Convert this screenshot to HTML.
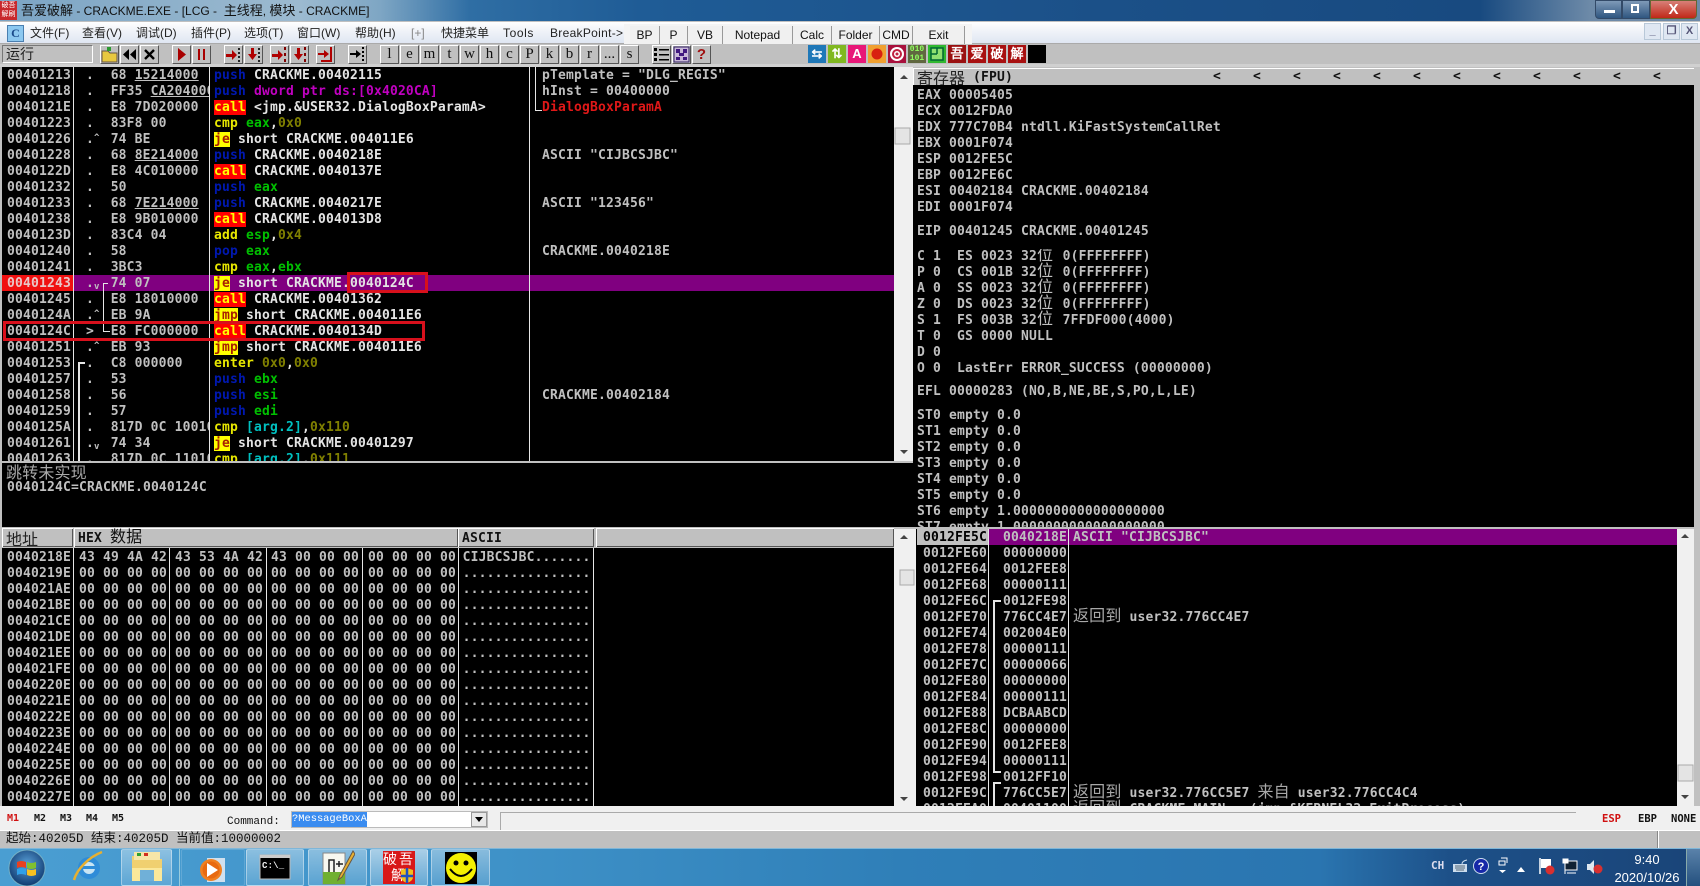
<!DOCTYPE html>
<html><head><meta charset="utf-8"><title>CRACKME</title>
<style>
html,body{margin:0;padding:0;width:1700px;height:886px;overflow:hidden;background:#c0c0c0;font-family:"Liberation Sans","WenQuanYi Zen Hei",sans-serif}
div,pre,svg{position:absolute;margin:0}
pre{font:bold 13px/16px "DejaVu Sans Mono","Liberation Mono",monospace;letter-spacing:.17px;color:#c0c0c0;white-space:pre;overflow:hidden}
.bk{background:#000}
.cj{font:400 16px/16px "WenQuanYi Zen Hei","Noto Sans CJK SC",sans-serif}
.ci{font:400 16px/0 "WenQuanYi Zen Hei","Noto Sans CJK SC",sans-serif;color:#a8a8a8}
.hd{font:bold 13px/21px "DejaVu Sans Mono",monospace;letter-spacing:.17px;color:#111;white-space:pre;background:#c0c0c0;top:528px;height:19px;box-shadow:inset 1px 1px 0 #fff,inset -1px -1px 0 #555}
i{font-style:normal}
.p{color:#0018b0}.y{color:#e8e800}.g{color:#00c000}.o{color:#808000}.m{color:#c000c0}.k{color:#00c0c0}
.w{color:#e4e4e4}
.c{background:#f00;color:#ff0}
.j{background:#ff0;color:#a82000}
u{text-decoration:underline}
.z{font:400 16px/0 "WenQuanYi Zen Hei",sans-serif;margin-right:9.5px;color:#c0c0c0}
.up{font-size:9px;line-height:0;vertical-align:3px}
.dn{font-size:9px;line-height:0;vertical-align:-2px}
.v{background:#e6e6e6;width:1px}
.b{top:45px;width:17px;height:17px;background:#c0c0c0;border:1px solid;border-color:#fff #555 #555 #fff;font:15px/17px "Liberation Serif",serif;text-align:center;color:#111;overflow:hidden}
.s{top:26px;height:19px;background:#f0f0f0;border-right:1px solid #999;border-bottom:1px solid #aaa;font:12px/19px "Liberation Sans",sans-serif;color:#111;text-align:center}
.mn{top:24px;height:18px;font:12px/18px "Liberation Sans","WenQuanYi Zen Hei",sans-serif;color:#222;white-space:pre}
.ic{top:45px;width:18px;height:18px;overflow:hidden;text-align:center;font:bold 13px/18px "WenQuanYi Zen Hei",sans-serif;color:#fff}
.mk{top:812px;font:bold 10px/14px "DejaVu Sans Mono",monospace;color:#111}
.tb{top:849px;height:37px;background:linear-gradient(180deg,rgba(255,255,255,.38),rgba(255,255,255,.12));border:1px solid rgba(255,255,255,.4);box-sizing:border-box;border-radius:2px}
.rb{border:3px solid #d8101c;box-sizing:border-box}
.wc{top:23px;width:17px;height:17px;background:#dfe7f2;border:1px solid #b8c8d8;box-sizing:border-box;font:bold 11px/15px "Liberation Sans";text-align:center;color:#557}
</style></head><body>

<!-- title bar -->
<div style="left:0;top:0;width:1700px;height:21px;background:linear-gradient(90deg,#7ba4c4 0,#9cbad0 300px,#7ea6c4 380px,#2f6ea4 470px,#1f5c96 640px,#1b5088 1100px,#184a80 1480px,#6d8aa8 1590px)"></div>
<div style="left:0;top:1px;width:17px;height:19px;background:#c8282c;color:#fff;font:7px/9px 'WenQuanYi Zen Hei',sans-serif;text-align:center">破吾<br>解刷</div>
<div style="left:21px;top:1px;height:20px;font:12px/20px 'Liberation Sans','WenQuanYi Zen Hei',sans-serif;color:#111;white-space:pre"><span style="font-size:13px">吾爱破解</span> - CRACKME.EXE - [LCG -  <span style="font-size:13px">主线程</span>, <span style="font-size:13px">模块</span> - CRACKME]</div>
<div style="left:1595px;top:0;width:27px;height:19px;background:linear-gradient(#7f9ab8,#2f5680);border:1px solid #334a68;box-sizing:border-box;border-radius:0 0 0 4px"><div style="left:8px;top:9px;width:11px;height:3px;background:#fff"></div></div>
<div style="left:1622px;top:0;width:28px;height:19px;background:linear-gradient(#7f9ab8,#2f5680);border:1px solid #334a68;box-sizing:border-box"><div style="left:8px;top:3px;width:8px;height:9px;border:2px solid #fff;box-sizing:border-box"></div></div>
<div style="left:1650px;top:0;width:47px;height:19px;background:linear-gradient(#d88078,#c02818);border:1px solid #663;box-sizing:border-box;border-radius:0 0 4px 0;color:#fff;font:bold 15px/17px 'Liberation Sans';text-align:center">X</div>

<!-- menu -->
<div style="left:0;top:22px;width:1700px;height:21px;background:linear-gradient(#fff,#f4f6fa 30%,#dfe6f2)"></div>
<div style="left:0;top:43px;width:1700px;height:1px;background:#aaa"></div>
<div style="left:7px;top:25px;width:15px;height:15px;background:#8cc8f0;border:1px solid #4a7fb0;font:bold 12px/15px 'Liberation Serif';text-align:center;color:#1a4a8a">C</div>
<div class="mn" style="left:30px">文件(F)</div><div class="mn" style="left:82px">查看(V)</div><div class="mn" style="left:136px">调试(D)</div><div class="mn" style="left:191px">插件(P)</div><div class="mn" style="left:244px">选项(T)</div><div class="mn" style="left:297px">窗口(W)</div><div class="mn" style="left:355px">帮助(H)</div><div class="mn" style="left:411px;color:#888">[+]</div><div class="mn" style="left:441px">快捷菜单</div><div class="mn" style="left:503px;letter-spacing:.6px">Tools</div><div class="mn" style="left:550px;letter-spacing:.3px">BreakPoint-&gt;</div>
<div style="left:624px;top:24px;width:348px;height:22px;background:#f4f4f4"></div>
<div class="s" style="left:630px;width:29px">BP</div><div class="s" style="left:660px;width:27px">P</div><div class="s" style="left:688px;width:34px">VB</div><div class="s" style="left:723px;width:69px">Notepad</div><div class="s" style="left:793px;width:38px">Calc</div><div class="s" style="left:832px;width:47px">Folder</div><div class="s" style="left:880px;width:32px">CMD</div><div class="s" style="left:913px;width:51px">Exit</div>
<div class="wc" style="left:1644px">_</div><div class="wc" style="left:1663px">&#10064;</div><div class="wc" style="left:1681px">X</div>

<!-- toolbar -->
<div style="left:0;top:44px;width:1699px;height:20px;background:#c0c0c0;border-bottom:1px solid #fff"></div>
<div style="left:2px;top:45px;width:91px;height:18px;border:1px solid;border-color:#777 #fff #fff #777;box-sizing:border-box;font:14px/16px 'WenQuanYi Zen Hei',sans-serif;color:#222;padding-left:3px">运行</div>
<div style="left:0;top:64px;width:1700px;height:3px;background:#d0d0d0"></div>
<div class="b" style="left:100px"><svg width="17" height="17" style="left:0;top:0"><path d="M1 5h6l2 2h7v9H1z" fill="#e8c840" stroke="#654"/><path d="M6 1l4 0 0 4-4 0z" fill="#2a9a30"/></svg></div>
<div class="b" style="left:120px"><svg width="17" height="17" style="left:0;top:0"><path d="M8 3v11L2 8.500zM15 3v11L9 8.500z" fill="#000"/></svg></div>
<div class="b" style="left:140px"><svg width="17" height="17" style="left:0;top:0"><path d="M4 4l9 9M13 4l-9 9" stroke="#000" stroke-width="2.400"/></svg></div>
<div class="b" style="left:172px"><svg width="17" height="17" style="left:0;top:0"><path d="M5 2v13l8-6.500z" fill="#a80000"/></svg></div>
<div class="b" style="left:192px"><svg width="17" height="17" style="left:0;top:0"><path d="M5 3h2v11H5zM10 3h2v11h-2z" fill="#a80000"/></svg></div>
<div class="b" style="left:224px"><svg width="17" height="17" style="left:0;top:0"><path d="M1 8h6V4l5 5-5 5v-3H1z" fill="#b00000"/><path d="M13 2h2v2h-2zM13 6h2v2h-2zM13 10h2v2h-2zM13 14h2v2h-2z" fill="#222"/></svg></div>
<div class="b" style="left:244px"><svg width="17" height="17" style="left:0;top:0"><path d="M6 2h3v6h3l-4.500 6L3 8h3z" fill="#b00000"/><path d="M13 2h2v2h-2zM13 6h2v2h-2zM13 10h2v2h-2zM13 14h2v2h-2z" fill="#222"/></svg></div>
<div class="b" style="left:270px"><svg width="17" height="17" style="left:0;top:0"><path d="M1 8h6V4l5 5-5 5v-3H1z" fill="#b00000"/><path d="M13 1h2v3h-2zM13 7h2v3h-2zM13 13h2v3h-2z" fill="#800000"/></svg></div>
<div class="b" style="left:290px"><svg width="17" height="17" style="left:0;top:0"><path d="M6 2h3v6h3l-4.500 6L3 8h3z" fill="#b00000"/><path d="M13 1h2v3h-2zM13 7h2v3h-2zM13 13h2v3h-2z" fill="#800000"/></svg></div>
<div class="b" style="left:316px"><svg width="17" height="17" style="left:0;top:0"><path d="M1 7h6V4l5 4-5 4V9H1z" fill="#b00000"/><path d="M13 1h2v15H4v-2h9z" fill="#b00000"/></svg></div>
<div class="b" style="left:348px"><svg width="17" height="17" style="left:0;top:0"><path d="M1 7h6V4l5 4-5 4V9H1z" fill="#000"/><path d="M13 1h2v2h-2zM13 5h2v2h-2zM13 9h2v2h-2zM13 13h2v2h-2z" fill="#000"/></svg></div>
<div class="b" style="left:380px">l</div><div class="b" style="left:400px">e</div><div class="b" style="left:420px">m</div><div class="b" style="left:440px">t</div><div class="b" style="left:460px">w</div><div class="b" style="left:480px">h</div><div class="b" style="left:500px">c</div><div class="b" style="left:520px">P</div><div class="b" style="left:540px">k</div><div class="b" style="left:560px">b</div><div class="b" style="left:580px">r</div><div class="b" style="left:600px">...</div><div class="b" style="left:620px">s</div>
<div class="b" style="left:652px"><svg width="17" height="17" style="left:0;top:0"><path d="M1 2h3v3H1zM6 3h10v1.500H6zM1 7h3v3H1zM6 8h10v1.500H6zM1 12h3v3H1zM6 13h10v1.500H6z" fill="#000"/></svg></div>
<div class="b" style="left:672px"><svg width="17" height="17" style="left:0;top:0"><rect x="1" y="1" width="15" height="15" fill="#c8b8d8" stroke="#302060"/><path d="M3 3h4v4H3zM10 3h4v4h-4zM6 7h5v3H6zM3 11h4v3H3zM10 11h4v3h-4z" fill="#401880"/></svg></div>
<div class="b" style="left:692px;color:#a01010;font:bold 15px/17px 'Liberation Sans'">?</div>
<div class="ic" style="left:808px;background:#1f78b8">&#8646;</div><div class="ic" style="left:828px;background:#80b820">&#8645;</div><div class="ic" style="left:848px;background:#e81878">A</div><div class="ic" style="left:868px;background:#f0a030"><svg width="18" height="18" style="left:0;top:0"><circle cx="9" cy="9" r="5.500" fill="#d82010"/></svg></div><div class="ic" style="left:888px;background:#a8103c"><svg width="18" height="18" style="left:0;top:0"><circle cx="9" cy="9" r="7" fill="#fff"/><circle cx="9" cy="9" r="5" fill="#c02040"/><circle cx="9" cy="9" r="3" fill="#fff"/><circle cx="9" cy="9" r="1.500" fill="#c02040"/></svg></div><div class="ic" style="left:908px;background:#606840;font:bold 8px/9px 'Liberation Mono';color:#90ff60">010<br>101</div><div class="ic" style="left:928px;background:#30b830"><svg width="18" height="18" style="left:0;top:0"><path d="M3 3h12v12H3zM3 9h6M9 3v6" fill="#90e070" stroke="#063" stroke-width="1.500"/></svg></div><div class="ic" style="left:948px;background:#9a1010">吾</div><div class="ic" style="left:968px;background:#a81010">爱</div><div class="ic" style="left:988px;background:#a81010">破</div><div class="ic" style="left:1008px;background:#a81010">解</div><div class="ic" style="left:1028px;background:#000"></div>

<!-- disasm panel -->
<div class="bk" style="left:2px;top:67px;width:892px;height:394px"></div>
<div style="left:2px;top:275px;width:71px;height:16px;background:#f01010"></div>
<div style="left:74px;top:275px;width:820px;height:16px;background:#800080"></div>
<div class="v" style="left:73px;top:67px;height:394px"></div>
<div class="v" style="left:209px;top:67px;height:394px"></div>
<div class="v" style="left:529px;top:67px;height:394px"></div>
<pre style="left:7px;top:68px;width:66px;height:393px">00401213
00401218
0040121E
00401223
00401226
00401228
0040122D
00401232
00401233
00401238
0040123D
00401240
00401241
<i style="color:#e8c8c8">00401243</i>
00401245
0040124A
0040124C
00401251
00401253
00401257
00401258
00401259
0040125A
00401261
00401263</pre>
<pre style="left:86px;top:68px;width:24px;height:393px">.
.
.
.
.<i class="up">^</i>
.
.
.
.
.
.
.
.
.<i class="dn">v</i>
.
.<i class="up">^</i>
&gt;
.<i class="up">^</i>
.
.
.
.
.
.<i class="dn">v</i>
.</pre>
<pre style="left:110.700px;top:68px;width:98px;height:393px">68 <u>15214000</u>
FF35 <u>CA204000</u>
E8 7D020000
83F8 00
74 BE
68 <u>8E214000</u>
E8 4C010000
50
68 <u>7E214000</u>
E8 9B010000
83C4 04
58
3BC3
74 07
E8 18010000
EB 9A
E8 FC000000
EB 93
C8 000000
53
56
57
817D 0C 10010000
74 34
817D 0C 11010000</pre>
<pre class="w" style="left:214px;top:68px;width:314px;height:393px"><i class="p">push</i> CRACKME.00402115
<i class="p">push</i> <i class="m">dword ptr ds:[0x4020CA]</i>
<i class="c">call</i> &lt;jmp.&amp;USER32.DialogBoxParamA&gt;
<i class="y">cmp</i> <i class="g">eax</i>,<i class="o">0x0</i>
<i class="j">je</i> short CRACKME.004011E6
<i class="p">push</i> CRACKME.0040218E
<i class="c">call</i> CRACKME.0040137E
<i class="p">push</i> <i class="g">eax</i>
<i class="p">push</i> CRACKME.0040217E
<i class="c">call</i> CRACKME.004013D8
<i class="y">add</i> <i class="g">esp</i>,<i class="o">0x4</i>
<i class="p">pop</i> <i class="g">eax</i>
<i class="y">cmp</i> <i class="g">eax</i>,<i class="g">ebx</i>
<i class="j">je</i> short CRACKME.0040124C
<i class="c">call</i> CRACKME.00401362
<i class="j">jmp</i> short CRACKME.004011E6
<i class="c">call</i> CRACKME.0040134D
<i class="j">jmp</i> short CRACKME.004011E6
<i class="y">enter</i> <i class="o">0x0</i>,<i class="o">0x0</i>
<i class="p">push</i> <i class="g">ebx</i>
<i class="p">push</i> <i class="g">esi</i>
<i class="p">push</i> <i class="g">edi</i>
<i class="y">cmp</i> <i class="k">[arg.2]</i>,<i class="o">0x110</i>
<i class="j">je</i> short CRACKME.00401297
<i class="y">cmp</i> <i class="k">[arg.2]</i>,<i class="o">0x111</i></pre>
<pre style="left:542px;top:68px;width:340px;height:393px">pTemplate = "DLG_REGIS"
hInst = 00400000
<i style="color:#e01818">DialogBoxParamA</i>


ASCII "CIJBCSJBC"


ASCII "123456"


CRACKME.0040218E








CRACKME.00402184</pre>
<!-- jump lines -->
<div class="v" style="left:103px;top:283px;height:48px"></div>
<div style="left:103px;top:283px;width:5px;height:1px;background:#e6e6e6"></div>
<div style="left:103px;top:331px;width:7px;height:1px;background:#e6e6e6"></div>
<div class="v" style="left:78px;top:362px;height:99px;width:2px"></div>
<div style="left:78px;top:362px;width:7px;height:2px;background:#e6e6e6"></div>
<div class="v" style="left:535px;top:67px;height:43px"></div>
<div style="left:535px;top:110px;width:7px;height:1px;background:#e6e6e6"></div>
<!-- red marker boxes -->
<div class="rb" style="left:347px;top:272px;width:81px;height:21px"></div>
<div class="rb" style="left:3px;top:321px;width:422px;height:20px"></div>
<!-- scrollbar top -->
<div style="left:894px;top:67px;width:19px;height:394px;background:#f0f0f0"></div>
<svg width="19" height="394" style="left:894px;top:67px"><path d="M6 12l4-4 4 4zM6 383l4 4 4-4z" fill="#444"/><rect x="1" y="61" width="15" height="16" fill="#e4e4e4" stroke="#aaa"/></svg>

<!-- info pane -->
<div style="left:0;top:461px;width:913px;height:2px;background:#c0c0c0"></div>
<div class="bk" style="left:2px;top:463px;width:911px;height:64px"></div>
<pre class="cj" style="left:6px;top:463px;height:17px;color:#a8a8a8">跳转未实现</pre>
<pre style="left:7px;top:480px;width:400px;height:16px">0040124C=CRACKME.0040124C</pre>

<!-- registers -->
<div class="hd" style="left:913px;top:68px;width:781px;height:17px;line-height:17px;box-shadow:inset 1px 1px 0 #fff"></div>
<div class="cj" style="left:917px;top:68px;height:17px;line-height:18px;color:#222;white-space:pre">寄存器</div>
<pre style="left:973px;top:70px;height:15px;color:#111">(FPU)</pre>
<pre style="left:1213px;top:69px;height:16px;width:470px;color:#111;letter-spacing:32.170px">&lt;&lt;&lt;&lt;&lt;&lt;&lt;&lt;&lt;&lt;&lt;&lt;</pre>
<div class="bk" style="left:913px;top:85px;width:781px;height:442px"></div>
<pre style="left:917px;top:88px;width:700px;height:130px">EAX 00005405
ECX 0012FDA0
EDX 777C70B4 ntdll.KiFastSystemCallRet
EBX 0001F074
ESP 0012FE5C
EBP 0012FE6C
ESI 00402184 CRACKME.00402184
EDI 0001F074</pre>
<pre style="left:917px;top:224px;width:700px;height:16px">EIP 00401245 CRACKME.00401245</pre>
<pre style="left:917px;top:249px;width:700px;height:128px">C 1  ES 0023 32<i class="z">位</i>0(FFFFFFFF)
P 0  CS 001B 32<i class="z">位</i>0(FFFFFFFF)
A 0  SS 0023 32<i class="z">位</i>0(FFFFFFFF)
Z 0  DS 0023 32<i class="z">位</i>0(FFFFFFFF)
S 1  FS 003B 32<i class="z">位</i>7FFDF000(4000)
T 0  GS 0000 NULL
D 0
O 0  LastErr ERROR_SUCCESS (00000000)</pre>
<pre style="left:917px;top:384px;width:700px;height:16px">EFL 00000283 (NO,B,NE,BE,S,PO,L,LE)</pre>
<pre style="left:917px;top:408px;width:700px;height:119px">ST0 empty 0.0
ST1 empty 0.0
ST2 empty 0.0
ST3 empty 0.0
ST4 empty 0.0
ST5 empty 0.0
ST6 empty 1.0000000000000000000
ST7 empty 1.0000000000000000000</pre>

<!-- dump -->
<div class="hd" style="left:596px;width:298px"></div>
<div class="hd" style="left:2px;width:71px"></div>
<div class="cj" style="left:6px;top:528px;height:19px;line-height:20px;color:#222;white-space:pre">地址</div>
<div class="hd" style="left:74px;width:384px;padding-left:4px;box-sizing:border-box">HEX <span style="font:400 16px/19px 'WenQuanYi Zen Hei',sans-serif">数据</span></div>
<div class="hd" style="left:458px;width:136px;padding-left:4px;box-sizing:border-box">ASCII</div>
<div class="bk" style="left:2px;top:548px;width:892px;height:258px"></div>
<div class="v" style="left:73px;top:548px;height:258px"></div>
<div class="v" style="left:169px;top:548px;height:258px"></div>
<div class="v" style="left:266px;top:548px;height:258px"></div>
<div class="v" style="left:362px;top:548px;height:258px"></div>
<div class="v" style="left:458px;top:548px;height:258px"></div>
<div class="v" style="left:593px;top:548px;height:258px"></div>
<pre style="left:7px;top:550px;width:66px;height:256px">0040218E
0040219E
004021AE
004021BE
004021CE
004021DE
004021EE
004021FE
0040220E
0040221E
0040222E
0040223E
0040224E
0040225E
0040226E
0040227E</pre>
<pre style="left:79px;top:550px;width:90px;height:256px">43 49 4A 42
00 00 00 00
00 00 00 00
00 00 00 00
00 00 00 00
00 00 00 00
00 00 00 00
00 00 00 00
00 00 00 00
00 00 00 00
00 00 00 00
00 00 00 00
00 00 00 00
00 00 00 00
00 00 00 00
00 00 00 00</pre>
<pre style="left:175px;top:550px;width:90px;height:256px">43 53 4A 42
00 00 00 00
00 00 00 00
00 00 00 00
00 00 00 00
00 00 00 00
00 00 00 00
00 00 00 00
00 00 00 00
00 00 00 00
00 00 00 00
00 00 00 00
00 00 00 00
00 00 00 00
00 00 00 00
00 00 00 00</pre>
<pre style="left:271px;top:550px;width:90px;height:256px">43 00 00 00
00 00 00 00
00 00 00 00
00 00 00 00
00 00 00 00
00 00 00 00
00 00 00 00
00 00 00 00
00 00 00 00
00 00 00 00
00 00 00 00
00 00 00 00
00 00 00 00
00 00 00 00
00 00 00 00
00 00 00 00</pre>
<pre style="left:368px;top:550px;width:90px;height:256px">00 00 00 00
00 00 00 00
00 00 00 00
00 00 00 00
00 00 00 00
00 00 00 00
00 00 00 00
00 00 00 00
00 00 00 00
00 00 00 00
00 00 00 00
00 00 00 00
00 00 00 00
00 00 00 00
00 00 00 00
00 00 00 00</pre>
<pre style="left:462.600px;top:550px;width:130px;height:256px">CIJBCSJBC.......
................
................
................
................
................
................
................
................
................
................
................
................
................
................
................</pre>
<div style="left:894px;top:529px;width:19px;height:277px;background:#f0f0f0"></div>
<svg width="22" height="277" style="left:894px;top:529px"><rect width="22" height="277" fill="#f0f0f0"/><path d="M6 10l4-4 4 4zM6 268l4 4 4-4z" fill="#444"/><rect x="6" y="41" width="14" height="15" fill="#e4e4e4" stroke="#aaa"/></svg>

<!-- stack -->
<div class="bk" style="left:916px;top:529px;width:761px;height:277px"></div>
<div style="left:917px;top:529px;width:71px;height:16px;background:#c0c0c0"></div>
<div style="left:989px;top:529px;width:688px;height:16px;background:#800080"></div>
<div class="v" style="left:988px;top:529px;height:277px"></div>
<div class="v" style="left:1068px;top:529px;height:277px"></div>
<pre style="left:923px;top:530px;width:64px;height:276px"><i style="color:#000">0012FE5C</i>
0012FE60
0012FE64
0012FE68
0012FE6C
0012FE70
0012FE74
0012FE78
0012FE7C
0012FE80
0012FE84
0012FE88
0012FE8C
0012FE90
0012FE94
0012FE98
0012FE9C
0012FEA0</pre>
<pre style="left:1003px;top:530px;width:64px;height:276px">0040218E
00000000
0012FEE8
00000111
0012FE98
776CC4E7
002004E0
00000111
00000066
00000000
00000111
DCBAABCD
00000000
0012FEE8
00000111
0012FF10
776CC5E7
00401100</pre>
<pre style="left:1073px;top:530px;width:604px;height:276px">ASCII "CIJBCSJBC"




<i class="ci">返回到</i> user32.776CC4E7










<i class="ci">返回到</i> user32.776CC5E7 <i class="ci">来自</i> user32.776CC4C4
<i class="ci">返回到</i> CRACKME.MAIN   (jmp.&amp;KERNEL32.ExitProcess)</pre>
<div class="v" style="left:993px;top:600px;height:172px;width:2px"></div>
<div style="left:993px;top:600px;width:8px;height:2px;background:#e6e6e6"></div>
<div style="left:993px;top:771px;width:8px;height:2px;background:#e6e6e6"></div>
<div class="v" style="left:993px;top:782px;height:24px;width:2px"></div>
<div style="left:993px;top:782px;width:8px;height:2px;background:#e6e6e6"></div>
<svg width="17" height="277" style="left:1677px;top:529px"><rect width="17" height="277" fill="#f0f0f0"/><path d="M4 9l4-4 4 4zM4 266l4 4 4-4z" fill="#444"/><rect x="1" y="236" width="15" height="16" fill="#e4e4e4" stroke="#aaa"/></svg>

<!-- command bar -->
<div style="left:0;top:806px;width:1700px;height:24px;background:#f0f0f0"></div>
<div class="mk" style="left:7px;color:#d01010">M1</div><div class="mk" style="left:34px">M2</div><div class="mk" style="left:60px">M3</div><div class="mk" style="left:86px">M4</div><div class="mk" style="left:112px">M5</div>
<div style="left:227px;top:815px;font:11px/14px 'Liberation Mono',monospace;color:#111">Command:</div>
<div style="left:291px;top:811px;width:197px;height:17px;background:#fff;border:1px solid #bbb;box-sizing:border-box"></div>
<div style="left:292px;top:812px;width:75px;height:15px;background:#3a8cf0;color:#fff;font:10.400px/15px 'Liberation Mono',monospace;white-space:nowrap;overflow:hidden">?MessageBoxA</div>
<div style="left:471px;top:812px;width:16px;height:15px;background:#e8e8e8;border:1px solid #999;box-sizing:border-box"><svg width="14" height="13" style="left:0;top:0"><path d="M3 4h8l-4 5z" fill="#000"/></svg></div>
<div style="left:500px;top:812px;width:1076px;height:18px;box-sizing:border-box;border-top:1px solid #aaa;border-left:1px solid #aaa;background:#f0f0f0"></div>
<div class="mk" style="left:1602px;color:#d01010;font:bold 10.500px/14px 'DejaVu Sans Mono',monospace">ESP</div><div class="mk" style="left:1638px;font:bold 10.500px/14px 'DejaVu Sans Mono',monospace">EBP</div><div class="mk" style="left:1671px;font:bold 10.500px/14px 'DejaVu Sans Mono',monospace">NONE</div>

<!-- status -->
<div style="left:0;top:830px;width:1700px;height:18px;background:#c0c0c0;border-top:1px solid #fff;box-sizing:border-box"></div>
<div style="left:6px;top:831px;height:17px;font:12.500px/17px 'WenQuanYi Zen Hei','Liberation Mono',monospace;color:#111;white-space:pre">起始:40205D 结束:40205D 当前值:10000002</div>
<div style="left:1657px;top:831px;width:1px;height:17px;background:#888;box-shadow:1px 0 0 #fff"></div>

<!-- taskbar -->
<div style="left:0;top:848px;width:1700px;height:38px;background:linear-gradient(90deg,#4a9ed2 0,#3f92c8 500px,#2f7fb8 900px,#2a75b0 1320px,#1d5088 1450px,#1a4478 1700px)"></div>
<div style="left:0;top:848px;width:1700px;height:1px;background:#7fb6d8"></div>
<svg width="40" height="38" style="left:7px;top:848px"><defs><radialGradient id="o" cx=".5" cy=".4" r=".6"><stop offset="0" stop-color="#5aa0d8"/><stop offset="1" stop-color="#0f3a70"/></radialGradient></defs><circle cx="20" cy="20" r="18" fill="url(#o)" stroke="#9cc" stroke-opacity=".6"/><path d="M10 14q4-2 9 0v6q-5-2-9 0z" fill="#e84020"/><path d="M20 14q4 2 9 0v6q-5 2-9 0z" fill="#80c030"/><path d="M10 21q4-2 9 0v6q-5-2-9 0z" fill="#30a0e8"/><path d="M20 21q4 2 9 0v6q-5 2-9 0z" fill="#f8c020"/></svg>
<svg width="36" height="36" style="left:71px;top:849px"><circle cx="18" cy="19" r="11" fill="#2f8cd8"/><circle cx="18" cy="19" r="6" fill="#c8e4f4"/><path d="M10 17h16v3H10z" fill="#2f8cd8"/><path d="M3 31C6 20 18 8 31 3" fill="none" stroke="#e8b030" stroke-width="2.500"/></svg>
<div class="tb" style="left:121px;width:51px"></div>
<svg width="36" height="34" style="left:130px;top:850px"><path d="M2 6h12l3 3h15v22H2z" fill="#f0d070"/><rect x="4" y="2" width="26" height="8" fill="#f6e6a8"/><rect x="7" y="3" width="4" height="3" fill="#30a030"/><rect x="14" y="3" width="4" height="3" fill="#d03020"/><path d="M2 18h30v13H2z" fill="#fbe89a"/><rect x="10" y="20" width="14" height="11" fill="#70b0d8"/></svg>
<div style="left:179px;top:849px;width:1px;height:37px;background:#9cd"></div>
<div class="tb" style="left:181px;width:64px;background:none;border-color:rgba(255,255,255,.15)"></div>
<svg width="34" height="30" style="left:197px;top:854px"><path d="M10 4h18v24H10z" fill="#cfe0ef"/><circle cx="14" cy="16" r="11" fill="#f08020"/><circle cx="14" cy="16" r="8.500" fill="#e86a10"/><path d="M10 9v14l11-7z" fill="#fff"/></svg>
<div class="tb" style="left:246px;width:58px"></div>
<svg width="34" height="28" style="left:259px;top:854px"><rect width="30" height="24" x="1" y="1" fill="#000" stroke="#bbb"/><rect x="1" y="1" width="30" height="3" fill="#ccc"/></svg>
<pre style="left:262px;top:858px;width:28px;height:16px;font:bold 9px/16px 'Liberation Mono';color:#eee">C:\_</pre>
<div class="tb" style="left:308px;width:59px"></div>
<svg width="34" height="36" style="left:321px;top:850px"><path d="M2 3h22v31H2z" fill="#f8f8f0" stroke="#888"/><path d="M2 22h22v12H2z" fill="#70b030"/><path d="M8 22V10h5v12M15 14h7M18 11v6" fill="none" stroke="#222" stroke-width="1.500"/><path d="M32 1L19 25l-2 5 4-3L34 4z" fill="#e8b030" stroke="#654"/></svg>
<div class="tb" style="left:370px;width:58px;background:linear-gradient(180deg,rgba(255,255,255,.55),rgba(255,255,255,.2))"></div>
<div style="left:383px;top:851px;width:32px;height:33px;background:#d81818;color:#fff;font:14px/16px 'WenQuanYi Zen Hei',sans-serif;text-align:center;letter-spacing:2px">破吾<br>解<svg width="14" height="15" style="left:17px;top:17px"><path d="M1 2l6-2 6 2v7q0 4-6 6-6-2-6-6z" fill="#f0c020"/><path d="M7 0v15M1 8h12" stroke="#2050c0" stroke-width="2.500"/></svg></div>
<div class="tb" style="left:431px;width:59px"></div>
<div style="left:445px;top:852px;width:32px;height:32px;background:#000"></div>
<svg width="32" height="32" style="left:445px;top:852px"><circle cx="16" cy="16" r="15" fill="#f4f000"/><circle cx="11" cy="11" r="2.500" fill="#000"/><circle cx="21" cy="11" r="2.500" fill="#000"/><path d="M5 17q11 14 22 0" fill="none" stroke="#000" stroke-width="2"/></svg>

<!-- tray -->
<div style="left:1431px;top:858px;font:bold 11px/16px 'DejaVu Sans Mono',monospace;color:#dde">CH</div>
<svg width="16" height="14" style="left:1452px;top:859px"><path d="M1 5h14v8H1z" fill="#cde"/><path d="M3 7h10M3 9h10M4 11h8" stroke="#567"/><path d="M10 5q0-3 5-4" stroke="#cde" fill="none"/></svg>
<svg width="16" height="16" style="left:1473px;top:858px"><circle cx="8" cy="8" r="7.500" fill="#1628a8" stroke="#cde"/><text x="8" y="12" font-size="11" font-weight="bold" fill="#fff" text-anchor="middle" font-family="Liberation Sans">?</text></svg>
<svg width="10" height="18" style="left:1498px;top:857px"><path d="M1 4h6v4H1zM3 1h6v5" fill="none" stroke="#fff"/><path d="M1 13h7l-3.500 3z" fill="#fff"/></svg>
<svg width="10" height="6" style="left:1517px;top:866px"><path d="M0 6l4-5 4 5z" fill="#fff"/></svg>
<svg width="18" height="18" style="left:1538px;top:858px"><path d="M2 0v16" stroke="#fff" stroke-width="1.500"/><path d="M3 1h10v9H3z" fill="#fff"/><circle cx="12" cy="12" r="4.500" fill="#d83030"/></svg>
<svg width="16" height="18" style="left:1562px;top:858px"><path d="M3 3h12v9H3z" fill="#123" stroke="#fff"/><path d="M1 1h5v4H1zM3 5v11" stroke="#fff" fill="#fff"/><path d="M5 15h9" stroke="#fff"/></svg>
<svg width="18" height="16" style="left:1586px;top:859px"><path d="M1 5h3l4-4v14l-4-4H1z" fill="#dfe8f0"/><circle cx="12" cy="10" r="4.500" fill="#d83030"/></svg>
<div style="left:1607px;top:851px;width:80px;text-align:center;font:13px/17px 'Liberation Sans';color:#fff">9:40</div>
<div style="left:1607px;top:869px;width:80px;text-align:center;font:13px/17px 'Liberation Sans';color:#fff">2020/10/26</div>
<div style="left:1686px;top:849px;width:14px;height:37px;background:linear-gradient(#5a82aa,#24507e);border-left:1px solid #8aa"></div>
</body></html>
